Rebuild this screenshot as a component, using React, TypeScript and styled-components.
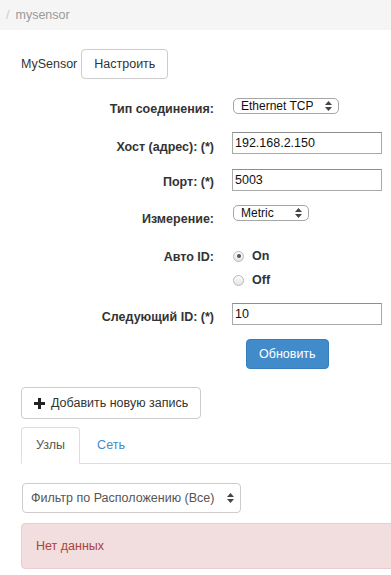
import React from 'react';
import styled, { createGlobalStyle } from 'styled-components';

export default function App() {
  return (
    <>
      <GlobalStyle />
      <Breadcrumb>
        <Divider>/</Divider>
        <Crumb>mysensor</Crumb>
      </Breadcrumb>
      <Page>
        <Header>
          <Title>MySensor</Title>
          <DefaultButton type="button" $h={30}>
            Настроить
          </DefaultButton>
        </Header>

        <Form>
          <Row $h={34}>
            <Label $pt={4}>Тип соединения:</Label>
            <Control>
              <SelectBox $w={106}>
                <NativeSelect defaultValue="tcp">
                  <option value="tcp">Ethernet TCP</option>
                </NativeSelect>
                <UpDown />
              </SelectBox>
            </Control>
          </Row>
          <Row $h={37}>
            <Label $pt={8}>Хост (адрес): (*)</Label>
            <Control>
              <TextInput defaultValue="192.168.2.150" />
            </Control>
          </Row>
          <Row $h={36}>
            <Label $pt={6}>Порт: (*)</Label>
            <Control>
              <TextInput defaultValue="5003" />
            </Control>
          </Row>
          <Row $h={39}>
            <Label $pt={7}>Измерение:</Label>
            <Control>
              <SelectBox $w={76}>
                <NativeSelect defaultValue="metric">
                  <option value="metric">Metric</option>
                </NativeSelect>
                <UpDown />
              </SelectBox>
            </Control>
          </Row>
          <Row $h={59}>
            <Label $pt={6}>Авто ID:</Label>
            <Control>
              <RadioLine>
                <RadioDot $checked />
                On
              </RadioLine>
              <RadioLine>
                <RadioDot />
                Off
              </RadioLine>
            </Control>
          </Row>
          <Row $h={36}>
            <Label $pt={7}>Следующий ID: (*)</Label>
            <Control>
              <TextInput defaultValue="10" />
            </Control>
          </Row>
          <Row $h={30}>
            <Label $pt={0} />
            <Control>
              <PrimaryButton type="button">Обновить</PrimaryButton>
            </Control>
          </Row>
        </Form>

        <AddButton type="button" $h={32}>
          <svg width="11" height="11" viewBox="0 0 11 11">
            <path d="M4 0h3v4h4v3H7v4H4V7H0V4h4z" fill="#222" />
          </svg>
          Добавить новую запись
        </AddButton>

        <Tabs>
          <Tab $active>Узлы</Tab>
          <Tab>Сеть</Tab>
        </Tabs>

        <FilterBox>
          <FilterSelect defaultValue="all">
            <option value="all">Фильтр по Расположению (Все)</option>
          </FilterSelect>
          <UpDown />
        </FilterBox>

        <Alert>Нет данных</Alert>
      </Page>
    </>
  );
}

function UpDown() {
  return (
    <Arrows width="7" height="10" viewBox="0 0 7 10">
      <path d="M0 4L3.5 0L7 4z M0 6L3.5 10L7 6z" fill="#444" />
    </Arrows>
  );
}

const GlobalStyle = createGlobalStyle`
  * { box-sizing: border-box; }
  html, body {
    margin: 0;
    padding: 0;
    background: #fff;
  }
  body {
    font-family: "Liberation Sans", Helvetica, Arial, sans-serif;
    font-size: 12.5px;
    color: #333;
    overflow: hidden;
  }
`;

const Breadcrumb = styled.div`
  display: flex;
  align-items: center;
  height: 30px;
  padding-left: 6px;
  background: #f5f5f5;
  font-size: 12.5px;
`;
const Divider = styled.span`
  color: #ccc;
  padding-right: 6px;
`;
const Crumb = styled.span`
  color: #999;
`;

const Page = styled.div`
  width: 440px;
  padding-left: 21px;
`;

const Header = styled.div`
  display: flex;
  align-items: center;
  gap: 4px;
  margin-top: 19px;
`;
const Title = styled.span`
  font-size: 12.5px;
`;

const DefaultButton = styled.button<{ $h: number }>`
  display: inline-flex;
  align-items: center;
  gap: 6px;
  height: ${(p) => p.$h}px;
  padding: 0 12px;
  border: 1px solid #ccc;
  border-radius: 4px;
  background: #fff;
  color: #333;
  font: inherit;
  font-size: 12.5px;
`;

const Form = styled.form`
  margin-top: 19px;
`;
const Row = styled.div<{ $h: number }>`
  display: flex;
  height: ${(p) => p.$h}px;
`;
const Label = styled.label<{ $pt: number }>`
  flex-shrink: 0;
  width: 193px;
  padding-top: ${(p) => p.$pt}px;
  line-height: 15px;
  text-align: right;
  font-weight: bold;
  color: #333;
`;
const Control = styled.div`
  display: flex;
  flex-direction: column;
  align-items: flex-start;
  margin-left: 18px;
`;

const SelectBox = styled.div<{ $w: number }>`
  position: relative;
  width: ${(p) => p.$w}px;
  height: 16px;
  margin-left: 1px;
`;
const NativeSelect = styled.select`
  appearance: none;
  width: 100%;
  height: 100%;
  padding: 0 0 0 7px;
  border: 1px solid #a6a6a6;
  border-radius: 5px;
  background: #fff;
  color: #111;
  font-family: inherit;
  font-size: 12px;
  line-height: 14px;
`;
const Arrows = styled.svg`
  position: absolute;
  right: 7px;
  top: 50%;
  transform: translateY(-50%);
  pointer-events: none;
`;

const TextInput = styled.input`
  width: 150px;
  height: 22px;
  padding: 0 2px;
  border: 1px solid #a9a9a9;
  border-top-color: #8e8e8e;
  border-radius: 0;
  color: #111;
  font-family: inherit;
  font-size: 12.5px;
`;

const RadioLine = styled.label`
  display: flex;
  align-items: center;
  gap: 8px;
  height: 24px;
  padding-left: 1px;
  font-weight: bold;
  color: #333;
`;
const RadioDot = styled.span<{ $checked?: boolean }>`
  display: flex;
  align-items: center;
  justify-content: center;
  width: 11px;
  height: 11px;
  border: 1px solid #b8b8b8;
  border-radius: 50%;
  background: linear-gradient(#fdfdfd, #e4e4e4);
  &::after {
    content: '';
    display: ${(p) => (p.$checked ? 'block' : 'none')};
    width: 4px;
    height: 4px;
    border-radius: 50%;
    background: #555;
  }
`;

const PrimaryButton = styled.button`
  height: 30px;
  margin-left: 14px;
  padding: 0 12px;
  border: 1px solid #357ebd;
  border-radius: 4px;
  background: #428bca;
  color: #fff;
  font-family: inherit;
  font-size: 12.5px;
`;

const AddButton = styled(DefaultButton)`
  margin-top: 18px;
`;

const Tabs = styled.ul`
  display: flex;
  height: 37px;
  margin: 8px 0 0;
  padding: 0;
  list-style: none;
  border-bottom: 1px solid #ddd;
`;
const Tab = styled.li<{ $active?: boolean }>`
  height: 37px;
  margin-right: 2px;
  padding: 0 14px;
  line-height: 35px;
  border: 1px solid ${(p) => (p.$active ? '#ddd' : 'transparent')};
  border-bottom-color: transparent;
  border-radius: 4px 4px 0 0;
  background: ${(p) => (p.$active ? '#fff' : 'transparent')};
  color: ${(p) => (p.$active ? '#555' : '#428bca')};
`;

const FilterBox = styled.div`
  position: relative;
  width: 219px;
  height: 30px;
  margin: 19px 0 0 1px;
`;
const FilterSelect = styled.select`
  appearance: none;
  width: 100%;
  height: 100%;
  padding: 0 0 0 8px;
  border: 1px solid #ccc;
  border-radius: 4px;
  background: #fff;
  color: #555;
  font-family: inherit;
  font-size: 12.5px;
`;

const Alert = styled.div`
  height: 46px;
  margin-top: 10px;
  padding: 0 14px;
  line-height: 44px;
  border: 1px solid #ebccd1;
  border-radius: 4px;
  background: #f2dede;
  color: #a94442;
`;
